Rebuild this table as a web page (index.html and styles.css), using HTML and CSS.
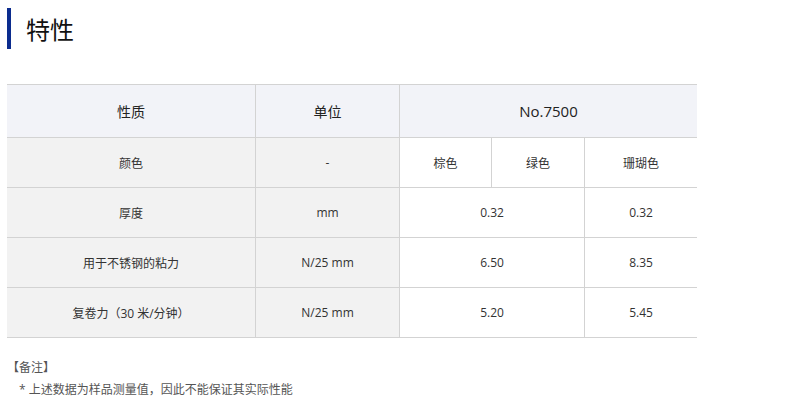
FILE: index.html
```html
<!DOCTYPE html>
<html lang="zh-CN">
<head>
<meta charset="utf-8">
<title>特性</title>
<link rel="stylesheet" href="styles.css">
</head>
<body>
<div class="page">
  <h2 class="title">特性</h2>
  <div class="spec">
    <div class="cell head">性质</div>
    <div class="cell head">单位</div>
    <div class="cell head prod span3 last">No.7500</div>

    <div class="cell label">颜色</div>
    <div class="cell label">-</div>
    <div class="cell">棕色</div>
    <div class="cell">绿色</div>
    <div class="cell last">珊瑚色</div>

    <div class="cell label">厚度</div>
    <div class="cell label">mm</div>
    <div class="cell span2">0.32</div>
    <div class="cell last">0.32</div>

    <div class="cell label">用于不锈钢的粘力</div>
    <div class="cell label">N/25 mm</div>
    <div class="cell span2">6.50</div>
    <div class="cell last">8.35</div>

    <div class="cell label">复卷力（30 米/分钟）</div>
    <div class="cell label">N/25 mm</div>
    <div class="cell span2">5.20</div>
    <div class="cell last">5.45</div>
  </div>
  <div class="notes">
    <p class="note-title">【备注】</p>
    <p class="note-line">* 上述数据为样品测量值，因此不能保证其实际性能</p>
  </div>
</div>
</body>
</html>
```
FILE: styles.css
```css
* { box-sizing: border-box; }
html, body { margin: 0; padding: 0; background: #fff; }
body {
  font-family: "Open Sans", "Noto Sans CJK SC", sans-serif;
  color: #333;
}
.page { padding: 8px 0 0 7px; }
.title {
  margin: 0;
  height: 41px;
  line-height: 41px;
  border-left: 4px solid #0b2c8e;
  padding-left: 15px;
  font-size: 24px;
  font-weight: normal;
  color: #111;
  font-family: "Noto Sans CJK SC", sans-serif;
}
.spec {
  margin-top: 35px;
  width: 690px;
  display: grid;
  grid-template-columns: 249px 144px 92px 93px 112px;
  grid-template-rows: 53px 50px 50px 50px 50px;
  border-top: 1px solid #d3d3d3;
}
.cell {
  display: flex;
  align-items: center;
  justify-content: center;
  border-right: 1px solid #d3d3d3;
  border-bottom: 1px solid #d3d3d3;
  font-size: 12px;
  background: #fff;
  color: #333;
}
.cell.last { border-right: none; }
.head { background: #f2f3f8; font-size: 14px; color: #222; }
.prod { font-size: 15px; }
.label { background: #f2f2f2; }
.span2 { grid-column: span 2; }
.span3 { grid-column: span 3; }
.notes { margin-top: 19px; font-size: 12px; color: #555; }
.notes p { margin: 0; line-height: 22px; }
.note-line { padding-left: 12px; }
```
